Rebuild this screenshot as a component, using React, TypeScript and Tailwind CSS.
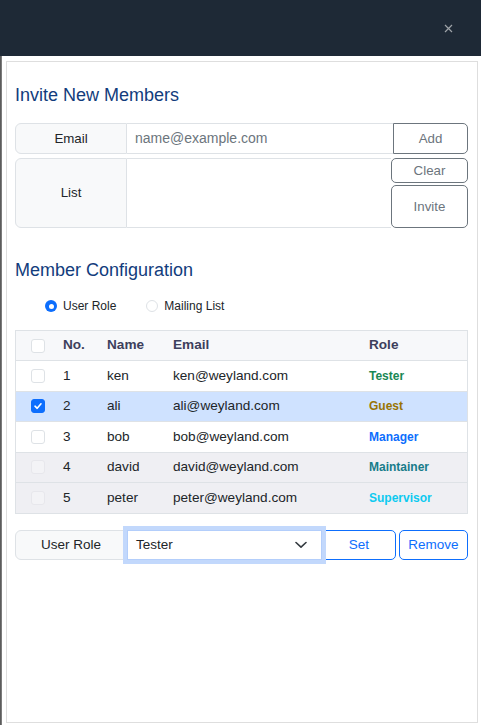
import React from "react";

type Row = {
  n: number;
  name: string;
  email: string;
  role: string;
  roleCls: string;
  rowCls: string;
  state: "off" | "on" | "dis";
};

const rows: Row[] = [
  { n: 1, name: "ken", email: "ken@weyland.com", role: "Tester", roleCls: "text-[#198754]", rowCls: "bg-white", state: "off" },
  { n: 2, name: "ali", email: "ali@weyland.com", role: "Guest", roleCls: "text-[#997404]", rowCls: "bg-[#cfe2ff]", state: "on" },
  { n: 3, name: "bob", email: "bob@weyland.com", role: "Manager", roleCls: "text-[#0d6efd]", rowCls: "bg-white", state: "off" },
  { n: 4, name: "david", email: "david@weyland.com", role: "Maintainer", roleCls: "text-[#177c8a]", rowCls: "bg-[#efeff3]", state: "dis" },
  { n: 5, name: "peter", email: "peter@weyland.com", role: "Supervisor", roleCls: "text-[#0dcaf0]", rowCls: "bg-[#efeff3]", state: "dis" },
];

function Check({ state }: { state: "off" | "on" | "dis" }) {
  if (state === "on") {
    return (
      <div className="w-[14px] h-[14px] rounded-[3px] bg-[#0d6efd] border border-[#0d6efd] flex items-center justify-center">
        <svg width="10" height="10" viewBox="0 0 10 10">
          <path d="M2 5.2 L4.2 7.3 L8 2.8" fill="none" stroke="#fff" strokeWidth="1.6" strokeLinecap="round" strokeLinejoin="round" />
        </svg>
      </div>
    );
  }
  if (state === "dis") {
    return <div className="w-[14px] h-[14px] rounded-[3px] bg-[#f3f3f6] border border-[#e7e7ec]" />;
  }
  return <div className="w-[14px] h-[14px] rounded-[3px] bg-white border border-[#dee2e6]" />;
}

export default function App() {
  return (
    <div className="w-[481px] h-[725px] flex flex-col overflow-hidden font-['Liberation_Sans',Arial,sans-serif] text-[#212529]">
      <div className="h-[56px] shrink-0 bg-[#1e2936] flex items-center justify-end pr-[28px]">
        <svg width="9" height="9" viewBox="0 0 9 9">
          <path d="M1 1 L8 8 M8 1 L1 8" stroke="#9ea3a8" strokeWidth="1.2" />
        </svg>
      </div>
      <div className="flex-1 flex min-h-0">
        <div className="w-[2px] bg-gradient-to-r from-[#4d4d4d] to-[#8c8c8c]" />
        <div className="flex-1 flex bg-white pt-[5px] pl-[4px] pr-[3px] pb-[2px]">
          <div className="flex-1 flex flex-col border border-[#dedede] pl-[8px] pr-[9px] pt-[22px]">
            <div className="text-[18px] leading-[22px] text-[#123c7c]">Invite New Members</div>

            <div className="mt-[17px] flex h-[31px] text-[13.3px]">
              <div className="w-[112px] shrink-0 bg-[#f8f9fa] border border-[#dee2e6] rounded-l-[6px] flex items-center justify-center">Email</div>
              <input
                className="flex-1 min-w-0 border-y border-[#dee2e6] px-[8px] text-[14px] outline-none placeholder:text-[#6c757d]"
                placeholder="name@example.com"
              />
              <button className="w-[75px] shrink-0 border border-[#6c757d] rounded-r-[5px] text-[#6c757d]">Add</button>
            </div>

            <div className="mt-[4px] flex h-[70px] text-[13.3px]">
              <div className="w-[112px] shrink-0 bg-[#f8f9fa] border border-[#dee2e6] rounded-l-[6px] flex items-center justify-center">List</div>
              <div className="flex-1 border-y border-[#dee2e6]" />
              <div className="w-[77px] shrink-0 flex flex-col gap-[2px]">
                <button className="h-[25px] border border-[#6c757d] rounded-[5px] text-[#6c757d]">Clear</button>
                <button className="flex-1 border border-[#6c757d] rounded-[5px] text-[#6c757d]">Invite</button>
              </div>
            </div>

            <div className="mt-[31px] text-[18px] leading-[22px] text-[#123c7c]">Member Configuration</div>

            <div className="mt-[15px] h-[20px] flex items-center pl-[30px] text-[12px]">
              <div className="w-[12px] h-[12px] rounded-full bg-[#0d6efd] flex items-center justify-center">
                <div className="w-[5px] h-[5px] rounded-full bg-white" />
              </div>
              <span className="ml-[6px]">User Role</span>
              <div className="ml-[30px] w-[12px] h-[12px] rounded-full border border-[#dee2e6] bg-white" />
              <span className="ml-[6px]">Mailing List</span>
            </div>

            <div className="mt-[14px] border-x border-t border-[#dee2e6] text-[13.6px]">
              <div className="h-[30px] box-border border-b border-[#dee2e6] bg-[#f7f8fa] flex items-center font-bold text-[#3d3f5c]">
                <div className="w-[47px] pl-[15px] flex items-center"><Check state="off" /></div>
                <div className="w-[44px]">No.</div>
                <div className="w-[66px]">Name</div>
                <div className="w-[196px]">Email</div>
                <div className="flex-1">Role</div>
              </div>
              {rows.map((r) => (
                <div key={r.n} className={`h-[30.5px] box-border border-b border-[#dee2e6] flex items-center ${r.rowCls}`}>
                  <div className="w-[47px] pl-[15px] flex items-center"><Check state={r.state} /></div>
                  <div className="w-[44px]">{r.n}</div>
                  <div className="w-[66px]">{r.name}</div>
                  <div className="w-[196px]">{r.email}</div>
                  <div className={`flex-1 text-[12px] font-bold ${r.roleCls}`}>{r.role}</div>
                </div>
              ))}
            </div>

            <div className="mt-[16.5px] flex h-[30px] text-[13.5px]">
              <div className="w-[112px] shrink-0 bg-[#f8f9fa] border border-[#dee2e6] rounded-l-[6px] flex items-center justify-center">User Role</div>
              <div className="relative z-10 w-[195px] shrink-0 bg-white border border-[#b3cefb] shadow-[0_0_0_4px_#c2d8fc] flex items-center justify-between pl-[8px] pr-[14px]">
                <span>Tester</span>
                <svg width="12" height="8" viewBox="0 0 12 8">
                  <path d="M1 1.5 L6 6.2 L11 1.5" fill="none" stroke="#343a40" strokeWidth="1.6" strokeLinecap="round" strokeLinejoin="round" />
                </svg>
              </div>
              <button className="w-[74px] shrink-0 border border-[#0d6efd] rounded-r-[5px] text-[#0d6efd]">Set</button>
              <button className="ml-[3px] flex-1 border border-[#0d6efd] rounded-[5px] text-[#0d6efd]">Remove</button>
            </div>
          </div>
        </div>
      </div>
    </div>
  );
}
